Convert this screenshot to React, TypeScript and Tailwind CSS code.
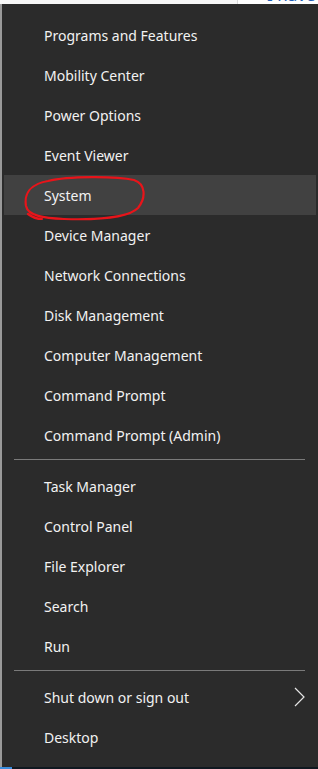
type Item = { label: string; arrow?: boolean; active?: boolean };

const groups: Item[][] = [
  [
    { label: "Programs and Features" },
    { label: "Mobility Center" },
    { label: "Power Options" },
    { label: "Event Viewer" },
    { label: "System", active: true },
    { label: "Device Manager" },
    { label: "Network Connections" },
    { label: "Disk Management" },
    { label: "Computer Management" },
    { label: "Command Prompt" },
    { label: "Command Prompt (Admin)" },
  ],
  [
    { label: "Task Manager" },
    { label: "Control Panel" },
    { label: "File Explorer" },
    { label: "Search" },
    { label: "Run" },
  ],
  [{ label: "Shut down or sign out", arrow: true }, { label: "Desktop" }],
];

const MenuRow = ({ item }: { item: Item }) => (
  <div
    className={`relative mx-[2px] flex h-[40px] items-center pl-[40px] pr-[11px] text-[14px] text-[#f2f2f2] ${
      item.active ? "bg-[#414141]" : ""
    }`}
  >
    <span className="flex-1">{item.label}</span>
    {item.arrow && (
      <svg width="11" height="20" viewBox="0 0 11 20" fill="none">
        <path d="M1 1 L10 10 L1 19" stroke="#e6e6e6" strokeWidth="1.2" />
      </svg>
    )}
    {item.active && (
      // red marker scribble around the item
      <svg className="absolute left-[16px] top-[1px]" width="128" height="48" viewBox="0 0 128 48" fill="none">
        <path
          d="M28 5 C48 0 96 0 114 4 C126 8 126 22 118 32 C108 42 74 44 44 43 C24 42 8 40 6 30 C4 18 10 8 28 5 Z M8 38 C12 41 18 43 22 43"
          stroke="#e8141a"
          strokeWidth="2.2"
          strokeLinecap="round"
        />
      </svg>
    )}
  </div>
);

export default function App() {
  return (
    <div className="flex h-[769px] w-[318px] flex-col overflow-hidden bg-white" style={{ fontFamily: '"Noto Sans", "Open Sans", sans-serif' }}>
      <div className="flex h-[4px] overflow-hidden">
        <div className="w-[237px] bg-[#f7f7f7]" />
        <div className="w-[1px] bg-[#d9d9d9]" />
        <div className="flex-1 bg-white pl-[29px]">
          <div className="-mt-[14px] text-[17px] leading-[18px] text-[#1f5fb8]">I have</div>
        </div>
      </div>
      <div className="flex flex-1">
        <div className="w-[2px] bg-[#9a9a9a]" />
        <div className="flex-1 bg-[#2b2b2b] pt-[11px]">
          {groups.map((g, i) => (
            <div key={i}>
              {i > 0 && <div className="mb-[6px] ml-[12px] mr-[13px] mt-[4px] h-[1px] bg-[#7a7a7a]" />}
              {g.map((item) => (
                <MenuRow key={item.label} item={item} />
              ))}
            </div>
          ))}
        </div>
      </div>
      <div className="flex h-[2px]">
        <div className="w-[12px] bg-[#3b8ede]" />
        <div className="flex-1 bg-[#101820]" />
      </div>
    </div>
  );
}
